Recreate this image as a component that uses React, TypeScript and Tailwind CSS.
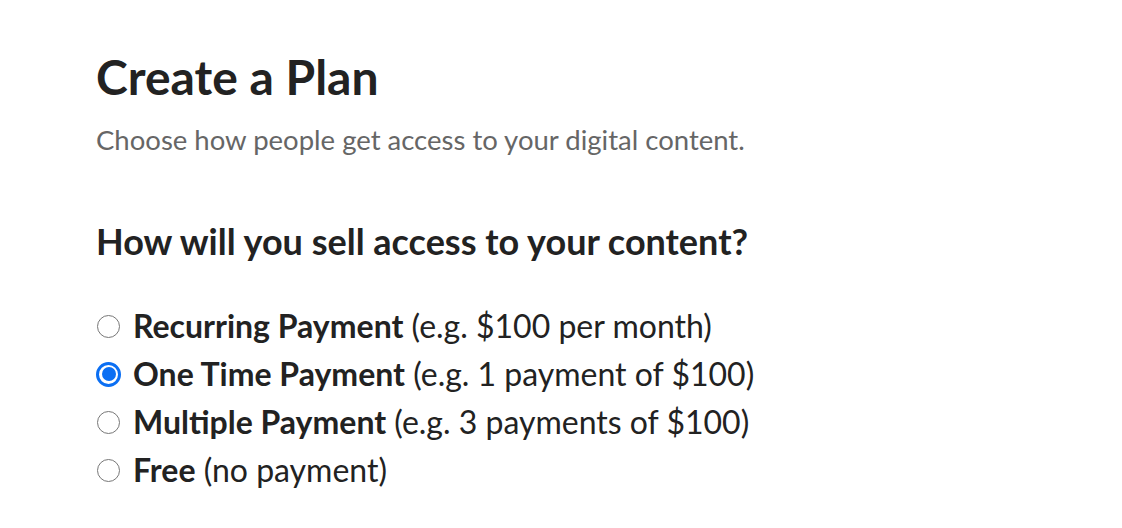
import { useState } from "react";

const options = [
  { id: "recurring", label: "Recurring Payment", hint: "(e.g. $100 per month)" },
  { id: "one", label: "One Time Payment", hint: "(e.g. 1 payment of $100)" },
  { id: "multiple", label: "Multiple Payment", hint: "(e.g. 3 payments of $100)" },
  { id: "free", label: "Free", hint: "(no payment)" },
];

function Radio({ checked }: { checked: boolean }) {
  return (
    <span className="flex h-[25px] w-[25px] shrink-0 items-center justify-center">
      {checked ? (
        <span className="flex h-[25px] w-[25px] items-center justify-center rounded-full border-[3px] border-[#0b6ff3] bg-white">
          <span className="h-[14px] w-[14px] rounded-full bg-[#0b6ff3]" />
        </span>
      ) : (
        <span className="h-[23px] w-[23px] rounded-full border-[1.75px] border-[#777] bg-white" />
      )}
    </span>
  );
}

export default function App() {
  const [selected, setSelected] = useState("one");

  return (
    <div className="min-h-screen bg-white pl-[96px] pt-[48px] text-[#222] font-['Lato','Liberation_Sans',sans-serif]">
      <h1 className="text-[48px] font-bold leading-[58px]">Create a Plan</h1>
      <p className="mt-[17px] text-[27.5px] leading-[33px] text-[#666]">
        Choose how people get access to your digital content.
      </p>

      <h2 className="mt-[64px] text-[36px] font-bold leading-[43px]">How will you sell access to your content?</h2>

      <div className="mt-[39px] flex flex-col">
        {options.map((opt) => (
          <label
            key={opt.id}
            className="flex h-[48px] cursor-pointer items-center gap-[12px] text-[32px]"
            onClick={() => setSelected(opt.id)}
          >
            <Radio checked={selected === opt.id} />
            <span>
              <span className="font-bold">{opt.label}</span> {opt.hint}
            </span>
          </label>
        ))}
      </div>
    </div>
  );
}
